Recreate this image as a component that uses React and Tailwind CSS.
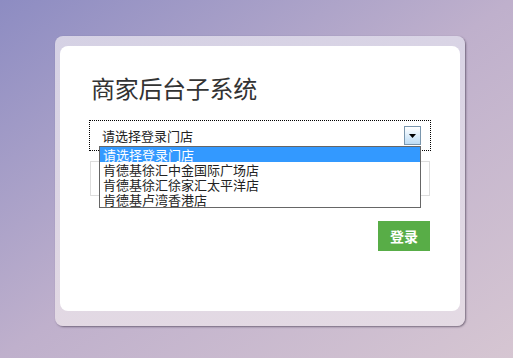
export default function App() {
  const items = ["请选择登录门店", "肯德基徐汇中金国际广场店", "肯德基徐汇徐家汇太平洋店", "肯德基卢湾香港店"];
  return (
    <div
      className="w-[513px] h-[358px] overflow-hidden bg-gradient-to-br from-[#8d8cc2] via-[#bfb0cc] to-[#d6c6d2] pt-[36px] pl-[55px]"
      style={{ fontFamily: '"Noto Sans CJK SC", "Liberation Sans", sans-serif' }}
    >
      <div className="w-[410px] h-[290px] rounded-[8px] bg-gradient-to-b from-[#dcd8e8]/90 to-[#e6dde6]/90 pt-[10px] px-[5px] pb-[15px] shadow-[1px_1px_2px_rgba(60,50,70,0.6)]">
        <div className="w-[400px] h-[265px] rounded-[8px] bg-white pt-[24px] px-[29px] flex flex-col">
          <h1 className="text-[24px] leading-[36px] text-[#333] pl-[2px] tracking-[-0.3px]">商家后台子系统</h1>
          <div className="relative mt-[14px] w-[342px] h-[31px] border border-dotted border-black flex items-center justify-between pl-[12px] pr-[9px]">
            <span className="text-[13px] leading-[15px] text-[#222] -mt-[1px]">请选择登录门店</span>
            <div className="w-[17px] h-[19px] border border-[#7a96ad] bg-gradient-to-b from-white to-[#bcdcf5] flex items-center justify-center">
              <svg width="7" height="4" viewBox="0 0 7 4"><path d="M0 0H7L3.5 4Z" fill="#000" /></svg>
            </div>
            <div className="absolute left-[9px] top-[25px] w-[322px] border border-[#666] bg-white z-10">
              {items.map((t, i) => (
                <div
                  key={i}
                  className={
                    i === 0
                      ? "h-[15px] leading-[15px] text-[13px] px-[3px] bg-[#3399ff] text-white whitespace-nowrap"
                      : "h-[15px] leading-[15px] text-[13px] px-[3px] text-[#222] whitespace-nowrap"
                  }
                >
                  {t}
                </div>
              ))}
            </div>
          </div>
          <div className="mt-[10px] ml-[1px] w-[340px] h-[35px] border border-[#dddddd]" />
          <button className="mt-[25px] self-end mr-[1px] w-[52px] h-[30px] bg-[#58ad47] text-white text-[14px] font-bold">
            登录
          </button>
        </div>
      </div>
    </div>
  );
}
